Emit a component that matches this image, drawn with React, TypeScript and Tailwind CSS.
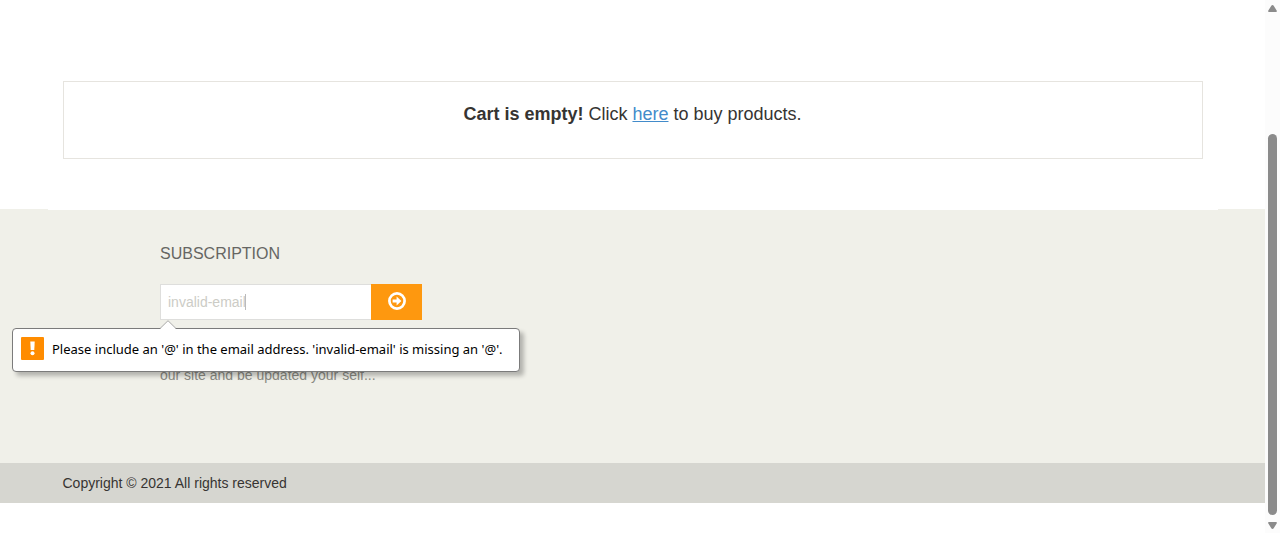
import { useState } from "react";

function ArrowCircleIcon() {
  return (
    <svg viewBox="0 0 18 18" className="size-[18px]" aria-hidden="true">
      <circle cx="9" cy="9" r="7.6" fill="none" stroke="#fff" strokeWidth="2.7" />
      <path d="M4.6 7.5h4V4.6L13.4 9l-4.8 4.4v-2.9h-4z" fill="#fff" />
    </svg>
  );
}

function WarningIcon() {
  return (
    <svg viewBox="0 0 23 23" className="size-[23px] shrink-0" aria-hidden="true">
      <rect width="23" height="23" rx="1" fill="#ff8c00" />
      <path d="M9.3 4.5h4.4l-.4 8.5H9.7z" fill="#fff" />
      <circle cx="11.5" cy="16.3" r="2" fill="#fff" />
    </svg>
  );
}

function ValidationBubble() {
  return (
    <div
      role="alert"
      className="absolute -left-[148px] top-11 z-20 flex h-11 min-w-[508px] items-center gap-2 rounded border border-[#7b7b7b] bg-white px-2 font-['Noto_Sans','Open_Sans',sans-serif] text-[13px] whitespace-nowrap text-black shadow-[4px_4px_4px_rgba(0,0,0,0.25)]"
    >
      <svg viewBox="0 0 16 9" className="absolute -top-[9px] left-[147px] h-[9px] w-4" aria-hidden="true">
        <path d="M0 9 8 1l8 8z" fill="#fff" />
        <path d="M0 8.5 8 .7l8 7.8" fill="none" stroke="#aaa" />
      </svg>
      <div className="-mt-1">
        <WarningIcon />
      </div>
      <span>Please include an '@' in the email address. 'invalid-email' is missing an '@'.</span>
    </div>
  );
}

function SubscribeForm() {
  const [email, setEmail] = useState("invalid-email");
  return (
    <form noValidate onSubmit={(e) => e.preventDefault()} className="relative mt-5 flex h-9 w-[262px]">
      <input
        type="email"
        aria-label="Email address"
        value={email}
        onChange={(e) => setEmail(e.target.value)}
        className="min-w-0 flex-1 border border-r-0 border-[#dededc] bg-white px-[7px] text-sm text-[#ccccc6] outline-none"
      />
      <span className="absolute left-[85px] top-[10px] h-4 w-px bg-[#bbb]" />
      <button type="submit" aria-label="Subscribe" className="flex w-[51px] justify-center bg-[#fe980f] pt-2">
        <ArrowCircleIcon />
      </button>
      <ValidationBubble />
    </form>
  );
}

function Scrollbar() {
  return (
    <div className="flex w-[15px] shrink-0 flex-col items-center bg-[#fcfcfc] pt-1 pb-[3px]" aria-hidden="true">
      <svg viewBox="0 0 9 8" className="h-2 w-[9px]">
        <path d="M4.5 1 Q5.2 1 5.7 1.8L8.8 6.7Q9.2 8 8 8H1Q-.2 8 .2 6.7L3.3 1.8Q3.8 1 4.5 1z" fill="#8b8b8b" />
      </svg>
      <div className="flex w-full flex-1 flex-col items-center pb-[7px]">
        <div className="grow-[122]" />
        <div className="w-[9px] grow-[381] rounded-full bg-[#8b8b8b]" />
      </div>
      <svg viewBox="0 0 9 8" className="h-2 w-[9px]">
        <path d="M4.5 7Q3.8 7 3.3 6.2L.2 1.3Q-.2 0 1 0H8Q9.2 0 8.8 1.3L5.7 6.2Q5.2 7 4.5 7z" fill="#8b8b8b" />
      </svg>
    </div>
  );
}

export default function App() {
  return (
    <div className="flex min-h-screen bg-white font-['Liberation_Sans',Arial,sans-serif]">
      <div className="min-w-0 flex-1">
        <main className="relative z-10 mx-auto max-w-[1170px] bg-white px-[15px] pt-[81px] pb-[51px]">
          <div className="border border-[#e6e4df] pt-5 pb-8 text-center text-lg leading-6 text-[#363432]">
            <b>Cart is empty!</b> Click{" "}
            <a href="#products" className="text-[#428bca] underline">
              here
            </a>{" "}
            to buy products.
          </div>
        </main>
        <footer className="-mt-px">
          <section className="bg-[#f0f0e9] pt-8 pb-[78px]">
            <div className="mx-auto max-w-[945px]">
              <h2 className="pt-[3px] text-base leading-5 text-[#666663]">SUBSCRIPTION</h2>
              <SubscribeForm />
              <p className="mt-[45px] text-sm leading-5 text-[#8a8a83]">our site and be updated your self...</p>
            </div>
          </section>
          <div className="bg-[#d6d6d0] py-[10px]">
            <p className="mx-auto max-w-[1140px] text-sm leading-5 text-[#363432]">Copyright © 2021 All rights reserved</p>
          </div>
        </footer>
      </div>
      <Scrollbar />
    </div>
  );
}
